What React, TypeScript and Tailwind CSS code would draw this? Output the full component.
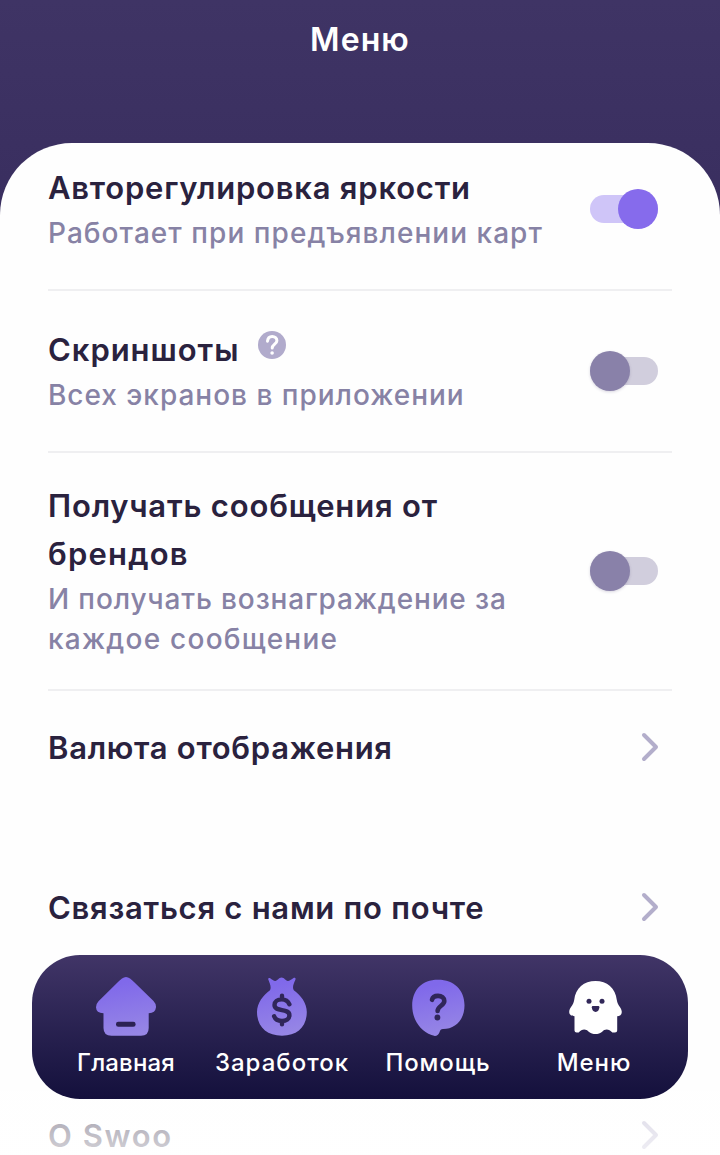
import { useState, type ReactNode } from 'react'
import clsx from 'clsx'

interface SettingRowProps {
  title: ReactNode
  subtitle?: ReactNode
  children: ReactNode
  className?: string
}

function SettingRow({ title, subtitle, children, className = '' }: SettingRowProps) {
  return (
    <div className={clsx('flex items-center justify-between', className)}>
      <div>
        <div className="text-[31px] leading-[48px] font-semibold text-[#2a223e]">{title}</div>
        {subtitle && (
          <div className="mt-px mb-px text-[28px] leading-[40px] font-medium text-[#8782a5]">{subtitle}</div>
        )}
      </div>
      {children}
    </div>
  )
}

function Toggle({ initial = false }: { initial?: boolean }) {
  const [on, setOn] = useState(initial)

  return (
    <button
      type="button"
      role="switch"
      aria-checked={on}
      onClick={() => setOn(!on)}
      className={clsx(
        'mr-3.5 flex h-7 w-[68px] shrink-0 items-center rounded-full',
        on ? 'justify-end bg-[#cfc5f8]' : 'justify-start bg-[#d1cedd]'
      )}
    >
      <span
        className={clsx(
          'size-10 shrink-0 rounded-full',
          on ? 'bg-[#866bec]' : 'bg-[#8981a9] shadow-[0_1px_3px_rgba(60,50,100,0.2)]'
        )}
      />
    </button>
  )
}

function Chevron() {
  return (
    <svg viewBox="0 0 20 32" className="mr-3 mb-0.5 h-8 w-5 shrink-0" fill="none" stroke="#b3aecb" strokeWidth="4" strokeLinecap="round" strokeLinejoin="round">
      <path d="M4 4 L16 16 L4 28" />
    </svg>
  )
}

function HintIcon() {
  return (
    <svg viewBox="0 0 28 28" className="mb-2.5 size-7" fill="none">
      <circle cx="14" cy="14" r="14" fill="#b1abcc" />
      <path d="M9.5 10.2 C9.8 7 11.8 5.5 14.2 5.5 C16.9 5.5 18.9 7.2 18.9 9.7 C18.9 12.9 14.2 13.4 14.2 17" stroke="#fff" strokeWidth="3" strokeLinecap="round" />
      <circle cx="14.1" cy="22" r="1.8" fill="#fff" />
    </svg>
  )
}

function HomeIcon() {
  return (
    <svg viewBox="14 8 64 64" className="size-16">
      <path fill="url(#violet)" d="M42 13.5 Q46 10.5 50 13.5 Q52.2 15.2 54 17 L73.5 36 Q76.2 38.8 76 42.2 Q75.4 48 68.7 48.2 V63 Q68.7 70.8 61 70.8 H31.5 Q23.5 70.8 23.5 63 V48.2 Q16.2 48 16 42.2 Q16 39 18.5 36.3 L38 17 Q39.8 15.2 42 13.5 Z" />
      <rect x="36" y="56.8" width="19.6" height="5" rx="2.3" fill="#2c2253" />
    </svg>
  )
}

function MoneyBagIcon() {
  return (
    <svg viewBox="10 8 64 64" className="size-16">
      <path fill="url(#violet)" d="M28.3 14.6 C27.8 13 29 12.6 30.2 13.3 C32 14.6 33.8 16 35.3 15.9 C37.6 15.6 38.8 12.4 41.5 12.4 C44.4 12.4 45.5 15.6 47.8 15.9 C49.4 16 51.2 14.6 53.2 13.2 C54.9 12.2 56 13 55.4 14.7 C53.6 18.8 52 22 53.8 25.2 C60.7 30 66.8 38 66.8 47 C66.8 61.5 57.5 70.7 42 70.7 C26.5 70.7 17 61.5 17 47 C17 38 23.2 30 30 25.2 C31.5 22 30 18.8 28.3 14.6 Z" />
      <path fill="none" stroke="#30265a" strokeWidth="4.4" strokeLinecap="round" strokeLinejoin="round" d="M42 30.8 V34.2 M49.4 39.3 C47.9 35.9 45.3 34.4 41.8 34.4 C37.3 34.4 34.5 36.8 34.5 40 C34.5 47.5 49.4 42.7 49.4 50.2 C49.4 53.8 46.3 56 42 56 C38 56 35.2 54.1 34.1 51.2 M42 56 V59.2" />
    </svg>
  )
}

function HelpIcon() {
  return (
    <svg viewBox="6 8 64 64" className="size-16">
      <path fill="url(#violet)" d="M38 14.7 C54 14.7 64.5 25 64.5 40.2 C64.5 54.5 55.5 64 43 64.1 C40.8 64.2 40.4 65 39.4 67.4 C38 70.5 35.8 71.9 31.5 70.1 C20 65.5 12.2 54.5 12.2 40.5 C12.2 25 22 14.7 38 14.7 Z" />
      <path fill="none" stroke="#30265a" strokeWidth="4.6" strokeLinecap="round" strokeLinejoin="round" d="M32 34.8 C32.6 32 34.8 30.9 38 30.9 C41.8 30.9 44.3 33 44.3 36 C44.3 40.7 37.6 40.8 37.6 46" />
      <circle cx="37.4" cy="52.5" r="2.9" fill="#30265a" />
    </svg>
  )
}

function GhostIcon() {
  return (
    <svg viewBox="12 8 64 64" className="size-16">
      <path fill="#fff" d="M45.5 16 C57 16 65.5 23 66.8 35 C67.6 41 71.7 42.5 71.8 47 C71.7 50 69.7 51 67.2 51.2 V65.5 Q67.2 67.5 65 67.5 H62.3 C59 63.6 54.7 63.8 52.2 66.7 C48.4 69.8 42.6 69.8 38.7 66.7 C36.2 63.8 31.8 63.6 28.7 67.5 H26.7 Q24.5 67.5 24.5 65.5 V51.2 C21.7 51 19.3 50 19.2 47 C19.3 42.5 23.3 41 24.2 35 C25.5 23 34 16 45.5 16 Z" />
      <circle cx="39" cy="36.3" r="2.5" fill="#322859" />
      <circle cx="52" cy="36.3" r="2.5" fill="#322859" />
      <path fill="#322859" d="M42.8 41 H48.4 Q49.5 41 49.4 42.3 C49 45.5 47.8 46.9 45.6 46.9 C43.4 46.9 42.1 45.5 41.8 42.3 Q41.7 41 42.8 41 Z" />
    </svg>
  )
}

const tabs = [
  { label: 'Главная', icon: HomeIcon, tracking: 'tracking-[0.15px]' },
  { label: 'Заработок', icon: MoneyBagIcon, tracking: 'tracking-[1px]' },
  { label: 'Помощь', icon: HelpIcon, tracking: 'tracking-[0.9px]' },
  { label: 'Меню', icon: GhostIcon, tracking: 'tracking-[0.9px]' }
]

function TabBar() {
  return (
    <nav className="absolute inset-x-8 top-[955px] grid h-36 grid-cols-4 rounded-[48px] bg-linear-to-b from-[#413567] to-[#14103c] px-4">
      <svg className="absolute size-0">
        <defs>
          <linearGradient id="violet" x1="0.4" y1="0" x2="0.6" y2="1">
            <stop offset="0.1" stopColor="#8069ea" />
            <stop offset="1" stopColor="#9787e5" />
          </linearGradient>
        </defs>
      </svg>
      {tabs.map(({ label, icon: Icon, tracking }) => (
        <a key={label} href="#" className="flex flex-col items-center gap-2.5 pt-[18px]">
          <Icon />
          <span className={clsx('text-[24px] leading-8 font-medium whitespace-nowrap text-white', tracking)}>{label}</span>
        </a>
      ))}
    </nav>
  )
}

export default function App() {
  return (
    <div className="relative h-[1155px] w-[720px] overflow-hidden bg-linear-to-b from-[#3f3465] to-[#392e5f] to-[215px] font-['Inter','Liberation_Sans',sans-serif]">
      <header className="flex h-[143px] justify-center pt-4">
        <h1 className="text-[32px] leading-[48px] font-semibold tracking-[1.1px] text-white">Меню</h1>
      </header>

      <main className="h-[1012px] overflow-hidden rounded-t-[72px] bg-[#fefefe] px-12">
        <SettingRow
          className="h-[148px] border-b-2 border-[#efeff1] pb-3.5"
          title={<span className="tracking-[0.78px]">Авторегулировка яркости</span>}
          subtitle={<span className="tracking-[1.04px]">Работает при предъявлении карт</span>}
        >
          <Toggle initial />
        </SettingRow>
        <SettingRow
          className="h-[162px] border-b-2 border-[#efeff1]"
          title={
            <span className="flex items-center gap-[19px]">
              <span className="tracking-[0.95px]">Скриншоты</span>
              <HintIcon />
            </span>
          }
          subtitle={<span className="tracking-[0.98px]">Всех экранов в приложении</span>}
        >
          <Toggle />
        </SettingRow>
        <SettingRow
          className="h-[238px] border-b-2 border-[#efeff1]"
          title={
            <>
              <span className="tracking-[0.82px]">Получать сообщения от</span>
              <br />
              <span className="tracking-[1.2px]">брендов</span>
            </>
          }
          subtitle={
            <>
              <span className="tracking-[0.86px]">И получать вознаграждение за</span>
              <br />
              <span className="tracking-[1.24px]">каждое сообщение</span>
            </>
          }
        >
          <Toggle />
        </SettingRow>
        <SettingRow className="h-[114px]" title={<span className="tracking-[0.7px]">Валюта отображения</span>}>
          <Chevron />
        </SettingRow>
        <SettingRow className="mt-[47px] h-[112px]" title={<span className="tracking-[0.73px]">Связаться с нами по почте</span>}>
          <Chevron />
        </SettingRow>
        <SettingRow className="mt-[116px] h-[112px]" title={<span className="tracking-[1.6px]">О Swoo</span>}>
          <Chevron />
        </SettingRow>
      </main>

      {/* Content fades out beneath the tab bar */}
      <div className="pointer-events-none absolute inset-x-0 top-[1027px] h-32 bg-linear-to-b from-white/20 to-white/80" />
      <TabBar />
    </div>
  )
}
